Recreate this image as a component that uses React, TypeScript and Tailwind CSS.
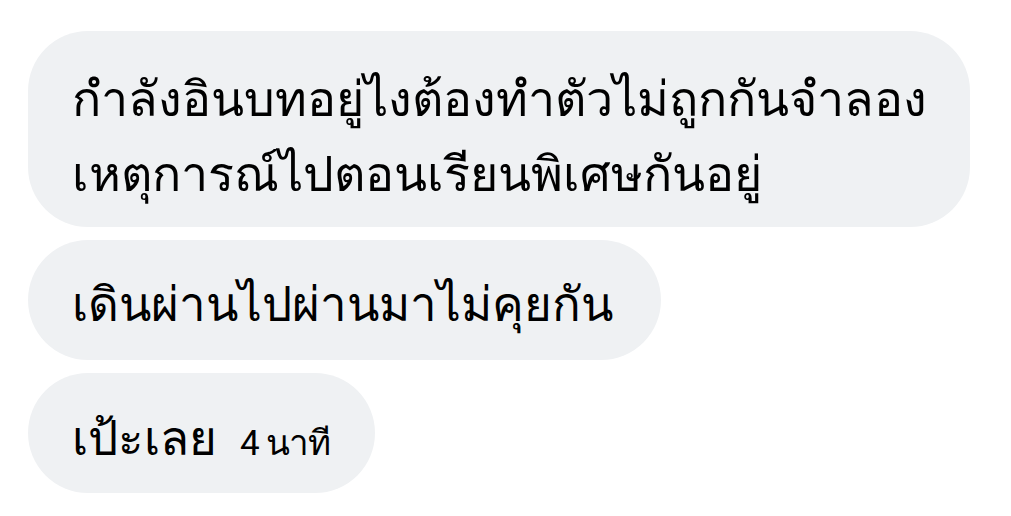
import React from "react";

const font = { fontFamily: '"Noto Sans", "DejaVu Sans", sans-serif' };

export default function App() {
  return (
    <div className="w-[1011px] h-[516px] bg-white pl-[28px] pt-[31px] flex flex-col items-start gap-[13px]" style={font}>
      {/* first bubble */}
      <div className="w-[942px] h-[196px] rounded-[60px] bg-[#eff1f3] pl-[44px] pr-[40px] pt-[12px] flex flex-col justify-center text-[48.4px] leading-[75px] text-black">
        <span>กำลังอินบทอยู่ไงต้องทำตัวไม่ถูกกันจำลอง</span>
        <span>เหตุการณ์ไปตอนเรียนพิเศษกันอยู่</span>
      </div>
      <div className="h-[120px] rounded-full bg-[#eff1f3] pl-[44px] pr-[48px] pt-[5px] flex items-center text-[47.5px] text-black">
        เดินผ่านไปผ่านมาไม่คุยกัน
      </div>
      <div className="h-[120px] rounded-full bg-[#eff1f3] pl-[44px] pr-[45px] pt-[7px] flex items-baseline gap-[23px] text-[47.5px] text-black">
        <span className="leading-[113px]">เป้ะเลย</span>
        <span className="text-[35px] tracking-[-1px]" style={{ fontFamily: '"Liberation Sans Narrow", Roboto, sans-serif' }}>4 นาที</span>
      </div>
    </div>
  );
}
